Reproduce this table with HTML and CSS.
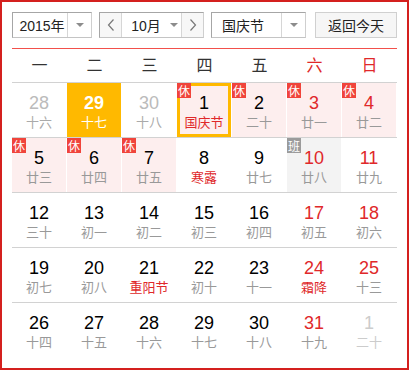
FILE: index.html
```html
<!DOCTYPE html>
<html lang="zh-CN">
<head>
<meta charset="utf-8">
<title>万年历</title>
<link rel="stylesheet" href="styles.css">
</head>
<body>
<div class="cal">
  <div class="toolbar">
    <div class="select year">
      <span class="select-text">2015年</span>
      <span class="select-arrow"><i class="tri"></i></span>
    </div>
    <div class="select month">
      <span class="nav-btn"><svg width="8" height="12" viewBox="0 0 8 12"><polyline points="6.5,0.5 1.5,6 6.5,11.5" fill="none" stroke="#777" stroke-width="1.2"/></svg></span>
      <span class="month-text">10月<i class="tri"></i></span>
      <span class="nav-btn next"><svg width="8" height="12" viewBox="0 0 8 12"><polyline points="1.5,0.5 6.5,6 1.5,11.5" fill="none" stroke="#777" stroke-width="1.2"/></svg></span>
    </div>
    <div class="select holiday">
      <span class="select-text">国庆节</span>
      <span class="select-arrow"><i class="tri"></i></span>
    </div>
    <div class="today-btn">返回今天</div>
  </div>

  <div class="weekdays">
    <span>一</span><span>二</span><span>三</span><span>四</span><span>五</span><span class="we">六</span><span class="we">日</span>
  </div>

  <div class="week">
    <div class="day other"><b>28</b><em>十六</em></div>
    <div class="day selected"><b>29</b><em>十七</em></div>
    <div class="day other"><b>30</b><em>十八</em></div>
    <div class="day rest today"><span class="badge">休</span><b>1</b><em class="fest">国庆节</em></div>
    <div class="day rest"><span class="badge">休</span><b>2</b><em>二十</em></div>
    <div class="day rest weekend"><span class="badge">休</span><b>3</b><em>廿一</em></div>
    <div class="day rest weekend"><span class="badge">休</span><b>4</b><em>廿二</em></div>
  </div>

  <div class="week">
    <div class="day rest"><span class="badge">休</span><b>5</b><em>廿三</em></div>
    <div class="day rest"><span class="badge">休</span><b>6</b><em>廿四</em></div>
    <div class="day rest"><span class="badge">休</span><b>7</b><em>廿五</em></div>
    <div class="day"><b>8</b><em class="fest">寒露</em></div>
    <div class="day"><b>9</b><em>廿七</em></div>
    <div class="day work weekend"><span class="badge gray">班</span><b>10</b><em>廿八</em></div>
    <div class="day weekend"><b>11</b><em>廿九</em></div>
  </div>

  <div class="week">
    <div class="day"><b>12</b><em>三十</em></div>
    <div class="day"><b>13</b><em>初一</em></div>
    <div class="day"><b>14</b><em>初二</em></div>
    <div class="day"><b>15</b><em>初三</em></div>
    <div class="day"><b>16</b><em>初四</em></div>
    <div class="day weekend"><b>17</b><em>初五</em></div>
    <div class="day weekend"><b>18</b><em>初六</em></div>
  </div>

  <div class="week">
    <div class="day"><b>19</b><em>初七</em></div>
    <div class="day"><b>20</b><em>初八</em></div>
    <div class="day"><b>21</b><em class="fest">重阳节</em></div>
    <div class="day"><b>22</b><em>初十</em></div>
    <div class="day"><b>23</b><em>十一</em></div>
    <div class="day weekend"><b>24</b><em class="fest">霜降</em></div>
    <div class="day weekend"><b>25</b><em>十三</em></div>
  </div>

  <div class="week last">
    <div class="day"><b>26</b><em>十四</em></div>
    <div class="day"><b>27</b><em>十五</em></div>
    <div class="day"><b>28</b><em>十六</em></div>
    <div class="day"><b>29</b><em>十七</em></div>
    <div class="day"><b>30</b><em>十八</em></div>
    <div class="day weekend"><b>31</b><em>十九</em></div>
    <div class="day other light"><b>1</b><em>二十</em></div>
  </div>
</div>
</body>
</html>
```

FILE: styles.css
```css
* { box-sizing: border-box; margin: 0; padding: 0; }

body {
  margin: 0;
  background: #fff;
  font-family: "Liberation Sans", "Noto Sans CJK SC", sans-serif;
}

.cal {
  width: 409px;
  height: 370px;
  border: 2px solid #d4201e;
  padding: 10px;
  background: #fff;
}

/* toolbar */
.toolbar {
  display: flex;
  height: 37px;
  padding-bottom: 10px;
  border-bottom: 1px solid #f2504b;
}

.select {
  display: flex;
  height: 26px;
  border: 1px solid;
  border-color: #a6a6a6 #cfcfcf #c4c4c4 #a6a6a6;
  background: #fff;
  font-size: 14px;
  color: #222;
}

.year { width: 80px; margin-right: 7px; }
.month { width: 105px; margin-right: 7px; }
.holiday { width: 95px; margin-right: 9px; }

.select-text {
  flex: 1;
  display: flex;
  align-items: center;
  justify-content: center;
  padding-left: 4px;
}

.holiday .select-text { justify-content: flex-start; padding-left: 10px; }

.select-arrow {
  width: 24px;
  display: flex;
  align-items: center;
  justify-content: center;
  border-left: 1px solid #d6d6d6;
}

.tri {
  display: inline-block;
  width: 0;
  height: 0;
  border-left: 4px solid transparent;
  border-right: 4px solid transparent;
  border-top: 4px solid #8c8c8c;
}

.nav-btn {
  width: 22px;
  display: flex;
  align-items: center;
  justify-content: center;
  background: #f7f7f7;
  border-right: 1px solid #d6d6d6;
}

.nav-btn.next {
  border-right: none;
  border-left: 1px solid #d6d6d6;
}

.month-text {
  flex: 1;
  display: flex;
  align-items: center;
  justify-content: center;
  gap: 9px;
  padding-left: 6px;
}

.today-btn {
  width: 82px;
  height: 26px;
  border: 1px solid #d0d0d0;
  background: #f6f6f6;
  display: flex;
  align-items: center;
  justify-content: center;
  font-size: 14px;
  color: #222;
}

/* weekday header */
.weekdays {
  display: grid;
  grid-template-columns: repeat(7, 55px);
  height: 34px;
  border-bottom: 1px solid #d2d2d2;
}

.weekdays span {
  text-align: center;
  line-height: 33px;
  font-size: 16px;
  color: #333;
}

.weekdays .we { color: #e0282a; }

/* weeks */
.week {
  display: grid;
  grid-template-columns: repeat(7, 55px);
  height: 55px;
  border-bottom: 1px solid #d2d2d2;
}

.week.last { border-bottom: none; }

.day {
  position: relative;
  width: 54px;
  height: 54px;
  display: flex;
  flex-direction: column;
  align-items: center;
  padding-top: 10px;
}

.day b {
  font-weight: normal;
  font-size: 18px;
  line-height: 20px;
  color: #000;
}

.day em {
  font-style: normal;
  font-size: 13px;
  line-height: 20px;
  color: #999;
}

.day em.fest { color: #e0282a; }

.day.weekend b { color: #e0282a; }

.day.other b { color: #bbb; }
.day.other em { color: #aaa; }
.day.other.light b,
.day.other.light em { color: #ccc; }

.day.rest { background: #fdeeee; }
.day.work { background: #f3f3f3; }

.day.selected { background: #ffb900; }
.day.selected b { color: #fff; font-weight: bold; }
.day.selected em { color: #fff; }

.day.today { box-shadow: inset 0 0 0 3px #ffb900; }

.badge {
  position: absolute;
  left: 0;
  top: 0;
  width: 14px;
  height: 15px;
  background: #f0443b;
  color: #fff;
  font-size: 12px;
  line-height: 15px;
  text-align: center;
  font-family: "Noto Sans CJK SC", sans-serif;
}

.badge.gray { background: #9b9b9b; }
```
